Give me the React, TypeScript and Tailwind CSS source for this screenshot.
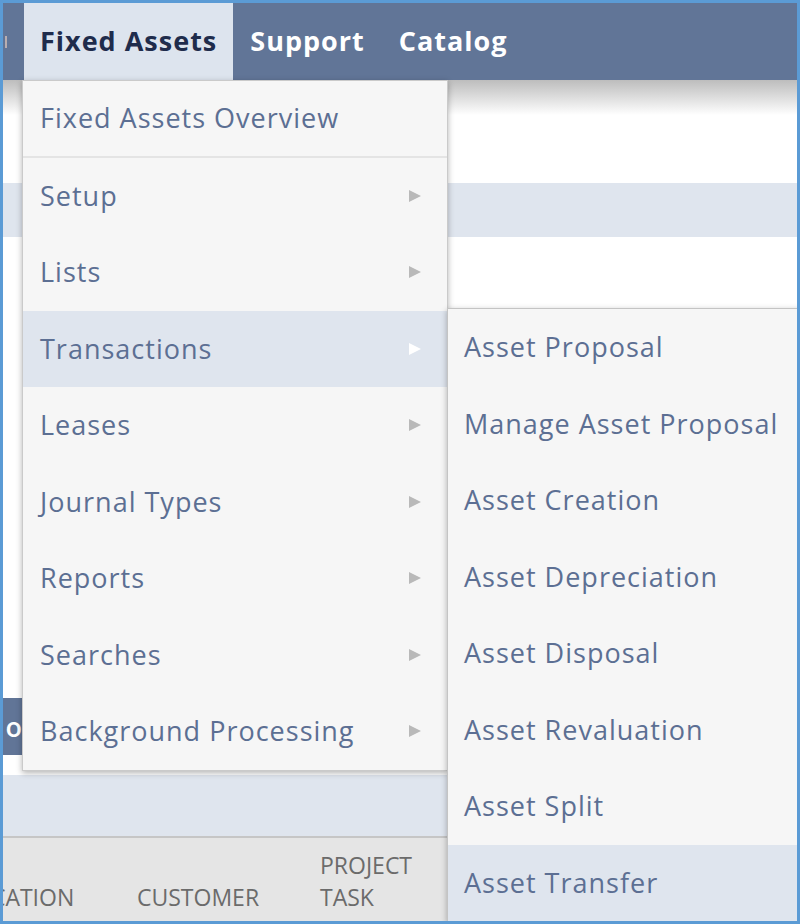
import React from 'react'

const menuItems = [
  { label: 'Fixed Assets Overview', arrow: false },
  { label: 'Setup', arrow: true },
  { label: 'Lists', arrow: true },
  { label: 'Transactions', arrow: true, active: true },
  { label: 'Leases', arrow: true },
  { label: 'Journal Types', arrow: true },
  { label: 'Reports', arrow: true },
  { label: 'Searches', arrow: true },
  { label: 'Background Processing', arrow: true },
]

const subItems = [
  'Asset Proposal',
  'Manage Asset Proposal',
  'Asset Creation',
  'Asset Depreciation',
  'Asset Disposal',
  'Asset Revaluation',
  'Asset Split',
  'Asset Transfer',
]

const Arrow = ({ white }: { white?: boolean }) => (
  <svg width="14" height="14" viewBox="0 0 14 14" className="shrink-0">
    <polygon points="1,1 13,7 1,13" fill={white ? '#ffffff' : '#b9b9b9'} />
  </svg>
)

export default function App() {
  return (
    <div
      className="relative w-[800px] h-[924px] overflow-hidden border-[3px] border-[#5b9bd5] bg-white"
      style={{ fontFamily: '"Open Sans", "Noto Sans", sans-serif' }}
    >
      {/* page behind the menus */}
      <div className="flex flex-col h-full">
        <div className="h-[77px] bg-[#617597] flex items-stretch shrink-0 text-[27px] tracking-[1px] font-bold">
          <div className="w-[21px] flex items-center">
            <div className="ml-[2px] w-[2px] h-[12px] bg-[#b9aeb0]" />
          </div>
          <div className="bg-[#dde4ee] px-[16px] flex items-center text-[#1f2c4c]">Fixed Assets</div>
          <div className="px-[17px] flex items-center text-white">Support</div>
          <div className="px-[17px] flex items-center text-white">Catalog</div>
        </div>
        <div className="h-[35px] shrink-0 bg-gradient-to-b from-[#bdbdbd] to-white" />
        <div className="h-[68px] shrink-0" />
        <div className="h-[54px] shrink-0 bg-[#dfe5ee]" />
        <div className="h-[461px] shrink-0" />
        <div className="h-[57px] shrink-0 flex">
          <div className="w-[19px] bg-[#617597] overflow-hidden flex items-center justify-end text-[27px] font-semibold text-white leading-none">
            o
          </div>
        </div>
        <div className="h-[20px] shrink-0" />
        <div className="h-[61px] shrink-0 bg-[#dfe5ee]" />
        <div className="h-[2px] shrink-0 bg-[#c6c6c6]" />
        <div className="flex-1 bg-[#e5e5e5] flex items-end pb-[8px] text-[23px] leading-[32px] text-[#6b6b6b] uppercase overflow-hidden">
          <div className="ml-[-42px] w-[176px] shrink-0">Location</div>
          <div className="w-[183px] shrink-0">Customer</div>
          <div className="shrink-0">
            Project
            <br />
            Task
          </div>
        </div>
      </div>

      {/* Fixed Assets dropdown */}
      <div className="absolute left-[19px] top-[77px] w-[426px] bg-[#f6f6f6] border border-[#cacaca] shadow-[0_2px_6px_rgba(0,0,0,0.3)]">
        {menuItems.map((item, i) => (
          <div
            key={item.label}
            className={`h-[76.5px] flex items-center justify-between pl-[17px] pr-[25px] text-[27px] tracking-[1px] text-[#5c6f93] ${
              item.active ? 'bg-[#dfe5ee]' : ''
            } ${i === 0 ? 'border-b-2 border-[#e4e4e4]' : ''}`}
          >
            <span>{item.label}</span>
            {item.arrow && <Arrow white={item.active} />}
          </div>
        ))}
      </div>

      {/* Transactions submenu */}
      <div className="absolute left-[444px] top-[305px] w-[360px] bg-[#f6f6f6] border border-[#c4c4c4] shadow-[0_2px_6px_rgba(0,0,0,0.3)]">
        {subItems.map((label, i) => (
          <div
            key={label}
            className={`h-[76.5px] flex items-center pl-[16px] text-[27px] tracking-[1px] text-[#5c6f93] ${
              i === subItems.length - 1 ? 'bg-[#dfe5ee]' : ''
            }`}
          >
            {label}
          </div>
        ))}
      </div>
    </div>
  )
}
